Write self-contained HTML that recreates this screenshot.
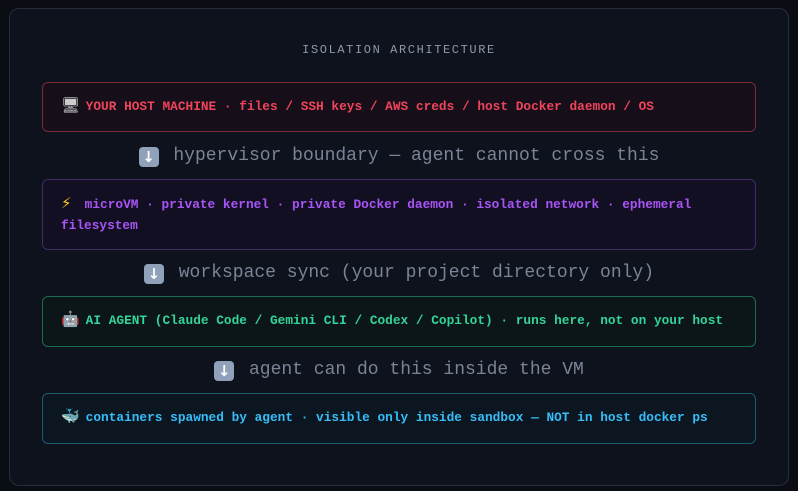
<!DOCTYPE html>
<html><head><meta charset="utf-8"><style>
*{margin:0;padding:0;box-sizing:border-box}
body{width:798px;height:491px;background:#0a0d14;font-family:"Liberation Mono","DejaVu Sans Mono",monospace;overflow:hidden;position:relative}
.panel{position:absolute;left:9px;top:8px;width:780px;height:478px;border:1px solid #262c3a;border-radius:10px;background:#0e121c}
.title{position:absolute;left:0;width:798px;top:43px;text-align:center;font-size:12px;letter-spacing:1.6px;color:#8f98a8}
.box{position:absolute;left:42px;width:714px;border-radius:6px;border:1px solid;font-size:12.8px;font-weight:bold;padding:0 18px;line-height:21px}
.arrow{position:absolute;left:0;width:798px;text-align:center;font-size:18px;color:#7a8496}
.e{font-family:"DejaVu Sans",sans-serif;font-weight:normal;display:inline-block;width:17px;font-size:15px;text-align:left}
.k{display:inline-block;width:20px;height:20px;border-radius:4px;background:#8fa2ba;color:#fff;font-family:"DejaVu Sans",sans-serif;font-size:15px;line-height:20px;text-align:center;vertical-align:-2px;margin-right:4px;font-weight:bold}
</style></head><body>
<div class="panel"></div>
<div class="title">ISOLATION ARCHITECTURE</div>
<div class="box" style="top:82px;height:50px;border-color:#7a2a38;background:#160f19;color:#f0435c;padding-top:12px"><span class="e" style="color:#ccc">🖥</span> YOUR HOST MACHINE · files / SSH keys / AWS creds / host Docker daemon / OS</div>
<div class="arrow" style="top:146px"><span class="k">↓</span> hypervisor boundary — agent cannot cross this</div>
<div class="box" style="top:179px;height:71px;border-color:#3e2c66;background:#130f22;color:#a855f7;padding-top:13px"><span class="e" style="color:#f5c518;width:16px">⚡</span> microVM · private kernel · private Docker daemon · isolated network · ephemeral filesystem</div>
<div class="arrow" style="top:263px"><span class="k">↓</span> workspace sync (your project directory only)</div>
<div class="box" style="top:296px;height:51px;border-color:#1d6b4e;background:#0c1619;color:#34d399;padding-top:12px"><span class="e" style="color:#aab">🤖</span> AI AGENT (Claude Code / Gemini CLI / Codex / Copilot) · runs here, not on your host</div>
<div class="arrow" style="top:360px"><span class="k">↓</span> agent can do this inside the VM</div>
<div class="box" style="top:393px;height:51px;border-color:#1c5a72;background:#0b1620;color:#38bdf8;padding-top:12px"><span class="e" style="color:#7ab">🐳</span> containers spawned by agent · visible only inside sandbox — NOT in host docker ps</div>
</body></html>
